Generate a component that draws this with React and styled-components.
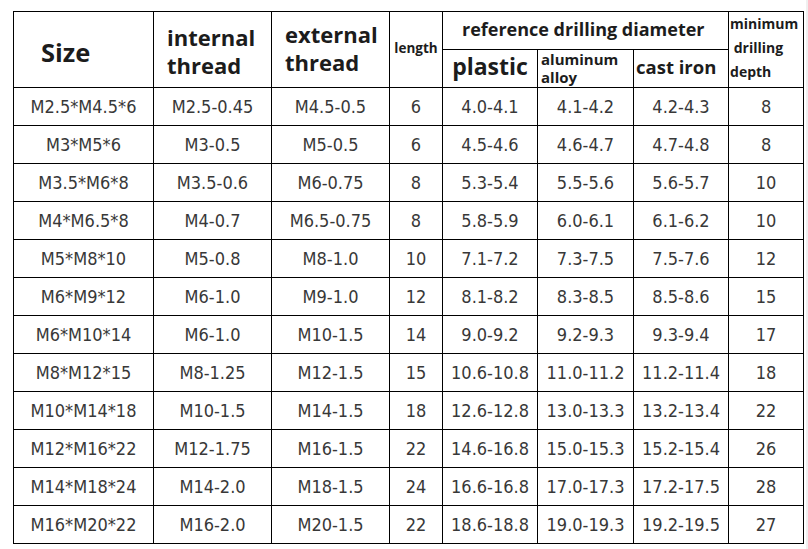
import React from "react";
import styled, { createGlobalStyle } from "styled-components";

const GlobalStyle = createGlobalStyle`
  html, body {
    margin: 0;
    padding: 0;
    background: #ffffff;
  }
`;

const Page = styled.div`
  display: flex;
  width: 808px;
  height: 549px;
  overflow: hidden;
`;

const Main = styled.div`
  flex: 1;
  padding: 11px 0 0 13px;
`;

const Edge = styled.div`
  width: 2px;
  background: #f0f0f0;
`;

const Table = styled.table`
  border-collapse: collapse;
  table-layout: fixed;
  width: 790px;
`;

const HeadCell = styled.th`
  border: 1px solid #000;
  padding: ${(p) => p.$pad || "0"};
  font-family: "Open Sans", "Noto Sans", sans-serif;
  font-weight: 700;
  font-size: ${(p) => p.$size || 16}px;
  line-height: ${(p) => p.$lh || "1.2"};
  color: #1c1c1c;
  text-align: ${(p) => p.$align || "center"};
  vertical-align: ${(p) => p.$valign || "middle"};
  white-space: nowrap;
  height: ${(p) => p.$h || "auto"};
  overflow: hidden;
`;

const Line = styled.span`
  display: block;
`;

const Cell = styled.td`
  border: 1px solid #000;
  padding: 0;
  height: 37px;
  font-family: "DejaVu Sans Condensed", "DejaVu Sans", sans-serif;
  font-size: 18px;
  color: #383838;
  text-align: center;
  vertical-align: middle;
  white-space: nowrap;
`;

const widths = [140, 118, 118, 53, 95, 96, 95, 75];

const rows = [
  ["M2.5*M4.5*6", "M2.5-0.45", "M4.5-0.5", "6", "4.0-4.1", "4.1-4.2", "4.2-4.3", "8"],
  ["M3*M5*6", "M3-0.5", "M5-0.5", "6", "4.5-4.6", "4.6-4.7", "4.7-4.8", "8"],
  ["M3.5*M6*8", "M3.5-0.6", "M6-0.75", "8", "5.3-5.4", "5.5-5.6", "5.6-5.7", "10"],
  ["M4*M6.5*8", "M4-0.7", "M6.5-0.75", "8", "5.8-5.9", "6.0-6.1", "6.1-6.2", "10"],
  ["M5*M8*10", "M5-0.8", "M8-1.0", "10", "7.1-7.2", "7.3-7.5", "7.5-7.6", "12"],
  ["M6*M9*12", "M6-1.0", "M9-1.0", "12", "8.1-8.2", "8.3-8.5", "8.5-8.6", "15"],
  ["M6*M10*14", "M6-1.0", "M10-1.5", "14", "9.0-9.2", "9.2-9.3", "9.3-9.4", "17"],
  ["M8*M12*15", "M8-1.25", "M12-1.5", "15", "10.6-10.8", "11.0-11.2", "11.2-11.4", "18"],
  ["M10*M14*18", "M10-1.5", "M14-1.5", "18", "12.6-12.8", "13.0-13.3", "13.2-13.4", "22"],
  ["M12*M16*22", "M12-1.75", "M16-1.5", "22", "14.6-16.8", "15.0-15.3", "15.2-15.4", "26"],
  ["M14*M18*24", "M14-2.0", "M18-1.5", "24", "16.6-16.8", "17.0-17.3", "17.2-17.5", "28"],
  ["M16*M20*22", "M16-2.0", "M20-1.5", "22", "18.6-18.8", "19.0-19.3", "19.2-19.5", "27"],
];

export default function App() {
  return (
    <>
      <GlobalStyle />
      <Page>
        <Main>
          <Table>
            <colgroup>
              {widths.map((w, i) => (
                <col key={i} style={{ width: w }} />
              ))}
            </colgroup>
            <thead>
              <tr>
                <HeadCell rowSpan={2} $size={25.5} $align="left" $pad="6px 0 0 27px">
                  Size
                </HeadCell>
                <HeadCell rowSpan={2} $size={22} $lh="28px" $align="left" $pad="2px 0 0 13px">
                  <Line>internal</Line>
                  <Line>thread</Line>
                </HeadCell>
                <HeadCell rowSpan={2} $size={22} $lh="28px" $align="left" $pad="0 0 3px 13px">
                  <Line>external</Line>
                  <Line>thread</Line>
                </HeadCell>
                <HeadCell rowSpan={2} $size={13.5} $pad="0 0 2px 0">
                  length
                </HeadCell>
                <HeadCell colSpan={3} $size={18} $align="left" $pad="0 0 2px 19px" $h="35px">
                  reference drilling diameter
                </HeadCell>
                <HeadCell rowSpan={2} $size={14} $lh="24px" $align="left" $valign="top" $pad="0 0 0 1px">
                  <Line>minimum</Line>
                  <Line>&nbsp;drilling</Line>
                  <Line>depth</Line>
                </HeadCell>
              </tr>
              <tr>
                <HeadCell $size={23} $pad="0 0 3px 0" $h="32px">
                  plastic
                </HeadCell>
                <HeadCell $size={15} $lh="18px" $align="left" $pad="0 0 1px 3px">
                  <Line>aluminum</Line>
                  <Line>alloy</Line>
                </HeadCell>
                <HeadCell $size={18.5} $align="left" $pad="0 0 2px 2px">
                  cast iron
                </HeadCell>
              </tr>
            </thead>
            <tbody>
              {rows.map((r, i) => (
                <tr key={i}>
                  {r.map((v, j) => (
                    <Cell key={j}>{v}</Cell>
                  ))}
                </tr>
              ))}
            </tbody>
          </Table>
        </Main>
        <Edge />
      </Page>
    </>
  );
}
